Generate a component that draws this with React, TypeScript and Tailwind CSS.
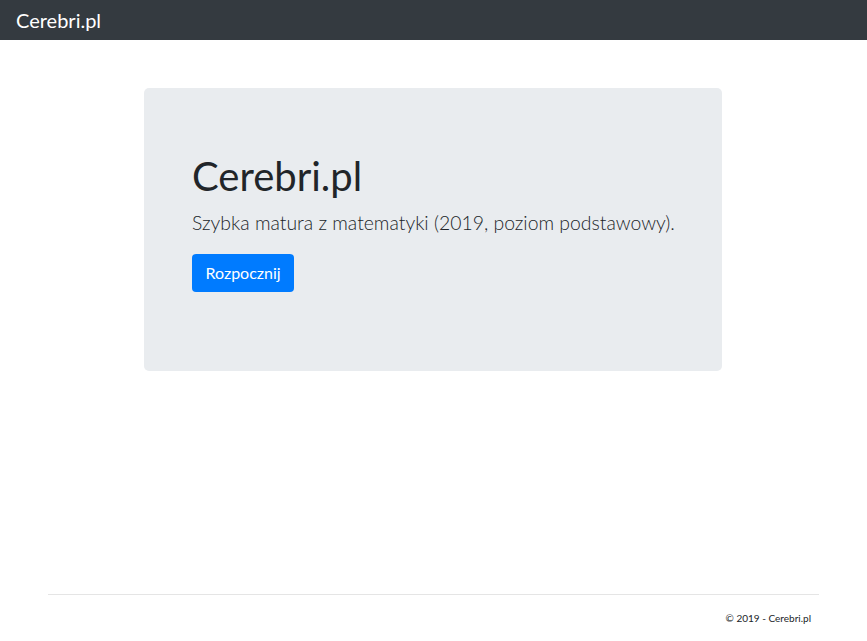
import React from "react";

const font = { fontFamily: 'Lato, "Open Sans", sans-serif' };

const App = () => {
  return (
    <div className="min-h-[641px] flex flex-col bg-white text-[#212529]" style={font}>
      {/* Navbar */}
      <nav className="h-10 bg-[#343a40] flex items-center px-4">
        <span className="text-white text-[20px] leading-none">Cerebri.pl</span>
      </nav>

      {/* Jumbotron */}
      <main className="flex-1 pt-12">
        <div className="ml-[144px] w-[578px] h-[283px] bg-[#e9ecef] rounded-[5px] px-12 pt-16">
          <h1 className="text-[40px] leading-[48px] mb-2">Cerebri.pl</h1>
          <p className="text-[19.4px] font-light leading-[30px] mb-4 whitespace-nowrap">
            Szybka matura z matematyki (2019, poziom podstawowy).
          </p>
          <button className="h-[38px] px-[13.5px] bg-[#007bff] text-white text-base rounded-[4px]">
            Rozpocznij
          </button>
        </div>
      </main>

      {/* Footer */}
      <footer className="mx-12 border-t border-[#e5e5e5] h-[47px] flex items-center justify-end pr-2">
        <span className="text-[10px]">© 2019 - Cerebri.pl</span>
      </footer>
    </div>
  );
};

export default App;
